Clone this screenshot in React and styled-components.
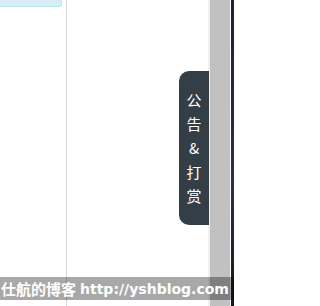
import styled, { createGlobalStyle } from "styled-components";

const GlobalStyle = createGlobalStyle`
  html, body {
    margin: 0;
    padding: 0;
    background: #fff;
  }
  body {
    font-family: "Liberation Sans", "Noto Sans CJK SC", sans-serif;
  }
`;

const Screen = styled.div`
  position: relative;
  display: flex;
  width: 234px;
  height: 306px;
  overflow: hidden;
`;

const Page = styled.div`
  flex: 1;
  display: flex;
  background: #fff;
`;

const Sidebar = styled.div`
  width: 66px;
  border-right: 1px solid #d4d4d4;
`;

const InfoBox = styled.div`
  width: 61px;
  height: 6px;
  background: #d9edf7;
  border-right: 1px solid #bce8f1;
  border-bottom: 1px solid #bce8f1;
  border-radius: 0 0 3px 0;
`;

const Scrollbar = styled.div`
  width: 21px;
  padding-left: 2px;
  background: #f1f1f1;
  display: flex;
`;

const Thumb = styled.div`
  flex: 1;
  background: #c1c1c1;
  border-right: 1px solid #fafafa;
`;

const DesktopEdge = styled.div`
  width: 3px;
  background: linear-gradient(#1c2230, #2a3140 60%, #141820);
`;

const NoticeTab = styled.div`
  position: absolute;
  left: 179px;
  top: 71px;
  width: 30px;
  height: 154px;
  box-sizing: border-box;
  padding: 17px 0;
  background: #343e47;
  border-radius: 10px 0 0 10px;
  display: flex;
  flex-direction: column;
  align-items: center;
  color: #fff;
  font-family: "Noto Sans CJK SC", sans-serif;
  font-size: 15px;
  line-height: 24px;
  cursor: pointer;
`;

const Watermark = styled.div`
  position: absolute;
  left: 0;
  right: 0;
  top: 277px;
  height: 23px;
  display: flex;
  align-items: center;
  gap: 4px;
  background: rgba(0, 0, 0, 0.34);
  color: #fff;
  font-weight: bold;
  white-space: nowrap;
  padding-left: 1px;
`;

const Author = styled.span`
  font-family: "Noto Sans CJK SC", sans-serif;
  font-size: 15px;
`;

const Url = styled.span`
  font-family: "DejaVu Sans", "Liberation Sans", sans-serif;
  font-size: 14px;
`;

export default function App() {
  return (
    <>
      <GlobalStyle />
      <Screen>
        <Page>
          <Sidebar>
            <InfoBox />
          </Sidebar>
        </Page>
        <Scrollbar>
          <Thumb />
        </Scrollbar>
        <DesktopEdge />
        <NoticeTab>
          {["公", "告", "&", "打", "赏"].map((c) => (
            <span key={c}>{c}</span>
          ))}
        </NoticeTab>
        <Watermark>
          <Author>仕航的博客</Author>
          <Url>http://yshblog.com</Url>
        </Watermark>
      </Screen>
    </>
  );
}
